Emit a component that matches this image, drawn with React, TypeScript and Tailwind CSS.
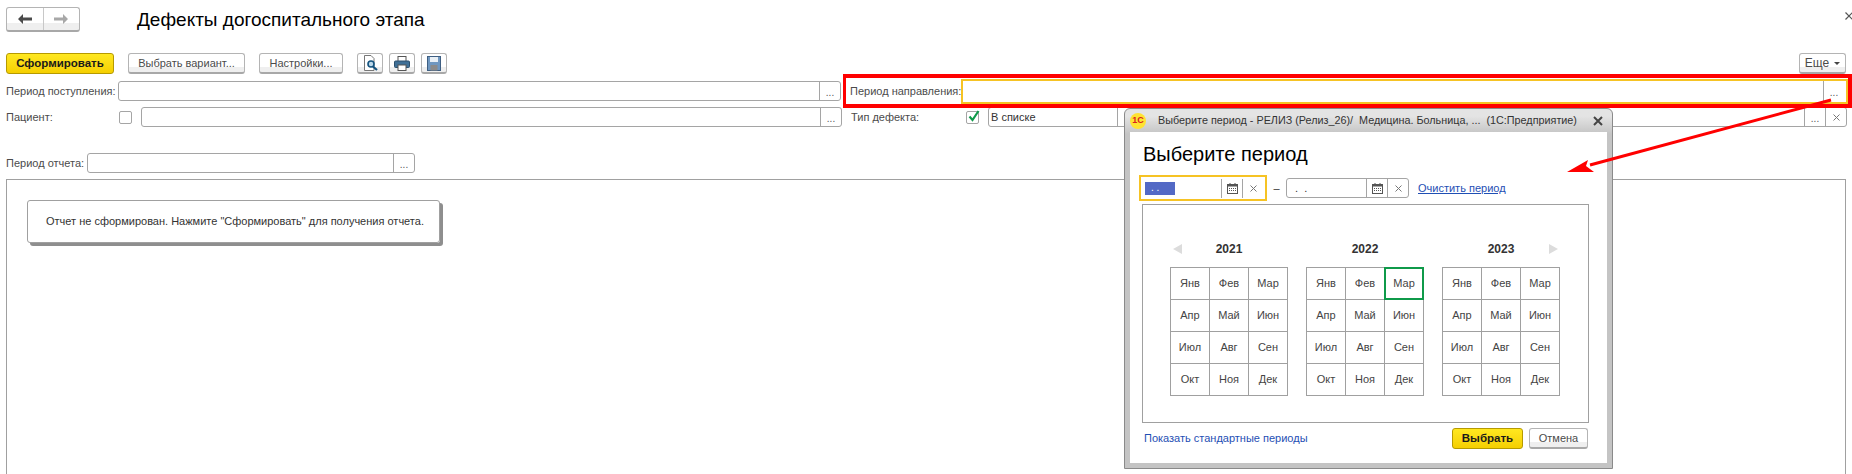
import type { ReactNode } from 'react';

const months = [
  ['Янв', 'Фев', 'Мар'],
  ['Апр', 'Май', 'Июн'],
  ['Июл', 'Авг', 'Сен'],
  ['Окт', 'Ноя', 'Дек'],
];

function Btn({ children, className = '' }: { children: ReactNode; className?: string }) {
  return (
    <div className={`flex items-center justify-center rounded-[3px] border border-[#b4b4b4] border-b-2 border-b-[#a8a8a8] bg-gradient-to-b from-white from-70% to-[#efefef] to-70% text-[#4b4b4b] ${className}`}>
      {children}
    </div>
  );
}

function YellowBtn({ children, className = '' }: { children: ReactNode; className?: string }) {
  return (
    <div className={`flex items-center justify-center rounded-[3px] border border-[#b69a00] bg-gradient-to-b from-[#ffe81f] to-[#f5cf00] text-[11.5px] font-bold text-[#1a1a1a] ${className}`}>
      {children}
    </div>
  );
}

function Cell({ children, className = '' }: { children?: ReactNode; className?: string }) {
  return <div className={`flex w-[21px] shrink-0 items-center justify-center self-stretch border-l border-[#a5a5a5] text-[#555] ${className}`}>{children}</div>;
}

function Input({ className = '', text, textClass = 'flex-1', children }: { className?: string; text?: string; textClass?: string; children?: ReactNode }) {
  return (
    <div className={`flex h-[20px] items-center rounded-[3px] border border-[#a5a5a5] bg-white ${className}`}>
      <div className={`min-w-0 pl-[2px] text-[#333] ${textClass}`}>{text}</div>
      {children}
    </div>
  );
}

function Dots() {
  return <Cell><span className="mt-[3px] text-[10px] leading-none">...</span></Cell>;
}

function X() {
  return (
    <svg width="7" height="7" viewBox="0 0 7 7" stroke="#777" strokeWidth="1">
      <path d="M0.5 0.5 L6.5 6.5 M6.5 0.5 L0.5 6.5" />
    </svg>
  );
}

function CalendarIcon() {
  return (
    <svg width="11" height="11" viewBox="0 0 11 11">
      <rect x="0.5" y="1.5" width="10" height="9" fill="none" stroke="#555" />
      <rect x="0.5" y="1.5" width="10" height="2" fill="#555" />
      <path d="M3 0v2M8 0v2" stroke="#555" />
      <path d="M2 5.5h7M2 7.5h7" stroke="#555" strokeDasharray="1 1" />
    </svg>
  );
}

function Checkbox({ checked }: { checked?: boolean }) {
  return (
    <div className="relative h-[13px] w-[13px] shrink-0 rounded-[2px] border border-[#a5a5a5] bg-white">
      {checked && (
        <svg className="absolute left-[0px] top-[-3px]" width="14" height="14" viewBox="0 0 14 14" fill="none" stroke="#0f9a4a" strokeWidth="2.2">
          <path d="M2.5 7.5 L5.5 11 L11.5 2" />
        </svg>
      )}
    </div>
  );
}

function MonthTable({ year, marked }: { year: string; marked?: boolean }) {
  return (
    <div className="w-[118px]">
      <div className="mb-[10px] text-center text-[12px] font-bold leading-[15px] text-[#333]">{year}</div>
      <div className="border-l border-t border-[#a0a0a0]">
        {months.map((row) => (
          <div key={row[0]} className="flex">
            {row.map((m) => (
              <div key={m} className="relative flex h-[32px] w-[39px] items-center justify-center border-b border-r border-[#a0a0a0] text-[#444]">
                {m}
                {marked && m === 'Мар' && <div className="absolute inset-[-1px] border-2 border-[#0f9a4a]" />}
              </div>
            ))}
          </div>
        ))}
      </div>
    </div>
  );
}

function PeriodDialog() {
  return (
    <div className="absolute left-[1124px] top-[108px] h-[361px] w-[489px] rounded-t-[6px] border border-[#8a8a8a] bg-gradient-to-b from-[#e4e4e4] from-[2%] to-[#c4c4c4] to-[7%] p-[5px] pt-0">
      <div className="flex h-[23px] items-center">
        <div className="flex h-[16px] w-[16px] shrink-0 items-center justify-center rounded-full bg-[#ffe332] text-[9px] font-bold leading-none text-[#d8231f]">1С</div>
        <div className="ml-[12px] whitespace-nowrap text-[10.8px] text-[#333]">Выберите период - РЕЛИЗ (Релиз_26)/&nbsp; Медицина. Больница, ...&nbsp; (1С:Предприятие)</div>
        <svg className="ml-auto mr-[4px]" width="10" height="10" viewBox="0 0 10 10" stroke="#444" strokeWidth="2">
          <path d="M1 1 L9 9 M9 1 L1 9" />
        </svg>
      </div>
      <div className="h-[331px] w-[477px] bg-white px-[12px]">
        <div className="pl-[1px] pt-[11px] text-[20px] leading-[23px] text-black">Выберите период</div>
        <div className="-ml-[3px] mt-[9px] flex h-[26px] items-center">
          <div className="flex h-[26px] w-[128px] items-center border-2 border-[#f6c324] pl-[4px]">
            <div className="h-[13px] w-[30px] bg-[#5369c5] pl-[6px] text-[10px] leading-[12px] text-white">. .</div>
            <div className="ml-auto flex h-[19px]">
              <Cell><CalendarIcon /></Cell>
              <Cell className="mr-[2px]"><X /></Cell>
            </div>
          </div>
          <div className="w-[19px] text-center text-[#333]">–</div>
          <Input className="w-[123px]" text="&nbsp; .&nbsp; .">
            <Cell><CalendarIcon /></Cell>
            <Cell><X /></Cell>
          </Input>
          <div className="ml-[9px] text-[#1f4fb4] underline">Очистить период</div>
        </div>
        <div className="mt-[3px] h-[219px] w-[447px] border border-[#a0a0a0]">
          <div className="relative flex gap-[18px] pl-[27px] pt-[37px]">
            <MonthTable year="2021" />
            <MonthTable year="2022" marked />
            <MonthTable year="2023" />
            <div className="absolute left-[30px] top-[39px] h-0 w-0 border-y-[5px] border-r-[9px] border-y-transparent border-r-[#dcdcdc]" />
            <div className="absolute right-[30px] top-[39px] h-0 w-0 border-y-[5px] border-l-[9px] border-y-transparent border-l-[#dcdcdc]" />
          </div>
        </div>
        <div className="mt-[5px] flex h-[21px] w-[446px] items-center">
          <div className="ml-[2px] text-[#1f4fb4]">Показать стандартные периоды</div>
          <YellowBtn className="ml-auto h-[21px] w-[71px]">Выбрать</YellowBtn>
          <Btn className="ml-[6px] h-[21px] w-[59px]">Отмена</Btn>
        </div>
      </div>
    </div>
  );
}

export default function App() {
  return (
    <div className="relative flex h-[474px] w-[1852px] flex-col overflow-hidden bg-white font-['Liberation_Sans',Arial,sans-serif] text-[11px] text-[#4b4b4b]">
      <div className="flex h-[53px] items-start pl-[6px] pt-[7px]">
        <Btn className="h-[25px] w-[74px]">
          <div className="flex h-full flex-1 items-center justify-center border-r border-[#c8c8c8]">
            <svg width="14" height="10" viewBox="0 0 14 10" fill="#4a4a4a"><path d="M0 5 L5 0 V3.5 H14 V6.5 H5 V10 Z" /></svg>
          </div>
          <div className="flex h-full flex-1 items-center justify-center">
            <svg width="14" height="10" viewBox="0 0 14 10" fill="#a8a8a8"><path d="M14 5 L9 0 V3.5 H0 V6.5 H9 V10 Z" /></svg>
          </div>
        </Btn>
        <div className="ml-[57px] text-[19px] leading-[26px] text-black">Дефекты догоспитального этапа</div>
        <svg className="absolute right-[-1px] top-[12px]" width="8" height="8" viewBox="0 0 8 8" stroke="#555" strokeWidth="1.2">
          <path d="M0.5 0.5 L7.5 7.5 M7.5 0.5 L0.5 7.5" />
        </svg>
      </div>

      <div className="flex h-[21px] items-start pl-[6px] pr-[6px]">
        <YellowBtn className="h-[21px] w-[108px]">Сформировать</YellowBtn>
        <Btn className="ml-[14px] h-[21px] w-[117px]">Выбрать вариант...</Btn>
        <Btn className="ml-[14px] h-[21px] w-[84px]">Настройки...</Btn>
        <Btn className="ml-[14px] h-[21px] w-[26px]">
          <svg width="15" height="16" viewBox="0 0 15 16">
            <path d="M1.5 0.5 H8 L11 3.5 V15.5 H1.5 Z" fill="#fff" stroke="#777" />
            <circle cx="8" cy="9" r="3" fill="#bcd8ea" stroke="#14537f" strokeWidth="1.6" />
            <path d="M10 11.5 L14 15" stroke="#14537f" strokeWidth="2.2" />
          </svg>
        </Btn>
        <Btn className="ml-[6px] h-[21px] w-[26px]">
          <svg width="16" height="15" viewBox="0 0 16 15">
            <rect x="4" y="0.5" width="8" height="5" fill="#fff" stroke="#555" />
            <rect x="0.5" y="5" width="15" height="6.5" rx="1" fill="#3f6f96" stroke="#2c4f6c" />
            <rect x="4" y="9" width="8" height="5.5" fill="#fff" stroke="#555" />
          </svg>
        </Btn>
        <Btn className="ml-[6px] h-[21px] w-[26px]">
          <svg width="14" height="15" viewBox="0 0 14 15">
            <rect x="0.5" y="0.5" width="13" height="14" fill="#6f97c0" stroke="#3f5f82" />
            <rect x="3" y="1" width="8" height="5" fill="#e9f0f6" />
            <rect x="3.5" y="9" width="7" height="5.5" fill="#8a8a8a" />
          </svg>
        </Btn>
        <Btn className="ml-auto h-[21px] w-[47px]">
          <span className="text-[12px]">Еще</span>
          <span className="ml-[5px] h-0 w-0 border-x-[3px] border-t-[3px] border-x-transparent border-t-[#444]" />
        </Btn>
      </div>

      <div className="mt-[7px] flex h-[20px] items-center whitespace-nowrap pl-[6px]">
        <div className="w-[112px] shrink-0">Период поступления:</div>
        <Input className="w-[723px]"><Dots /></Input>
        <div className="ml-[9px] w-[111px] shrink-0">Период направления:</div>
        <div className="flex h-[25px] w-[887px] items-center border-2 border-[#f6c324]">
          <div className="flex-1" />
          <div className="flex h-[21px]"><Dots /><div className="w-[2px]" /></div>
        </div>
      </div>

      <div className="mt-[6px] flex h-[20px] items-center whitespace-nowrap pl-[6px]">
        <div className="w-[113px] shrink-0">Пациент:</div>
        <Checkbox />
        <Input className="ml-[9px] w-[701px]"><Dots /></Input>
        <div className="ml-[9px] w-[115px] shrink-0">Тип дефекта:</div>
        <Checkbox checked />
        <Input className="ml-[9px] w-[859px]" text="В списке" textClass="w-[128px]">
          <Cell><span className="h-0 w-0 border-x-[4px] border-t-[4px] border-x-transparent border-t-[#555]" /></Cell>
          <div className="flex-1" />
          <Dots />
          <Cell><X /></Cell>
        </Input>
      </div>

      <div className="mt-[26px] flex h-[20px] items-center whitespace-nowrap pl-[6px]">
        <div className="w-[81px] shrink-0">Период отчета:</div>
        <Input className="w-[328px]"><Dots /></Input>
      </div>

      <div className="mx-[6px] mt-[6px] flex-1 border border-b-0 border-[#a0a0a0] pl-[20px] pt-[20px]">
        <div className="flex h-[43px] w-[413px] items-center rounded-[3px] border border-[#a0a0a0] pl-[18px] text-[#333] shadow-[3px_3px_0_#8e8e8e]">
          Отчет не сформирован. Нажмите "Сформировать" для получения отчета.
        </div>
      </div>

      <div className="absolute left-[843px] top-[74px] h-[34px] w-[1009px] border-y-4 border-l-[3px] border-r-4 border-[#ff0000]" />
      <PeriodDialog />
      <svg className="pointer-events-none absolute left-0 top-0" width="1852" height="474">
        <path d="M1831 100 L1590 165" stroke="#ff0000" strokeWidth="3" fill="none" />
        <path d="M1567 172 L1588 160 L1586 166 L1594 172 Z" fill="#ff0000" />
      </svg>
    </div>
  );
}
